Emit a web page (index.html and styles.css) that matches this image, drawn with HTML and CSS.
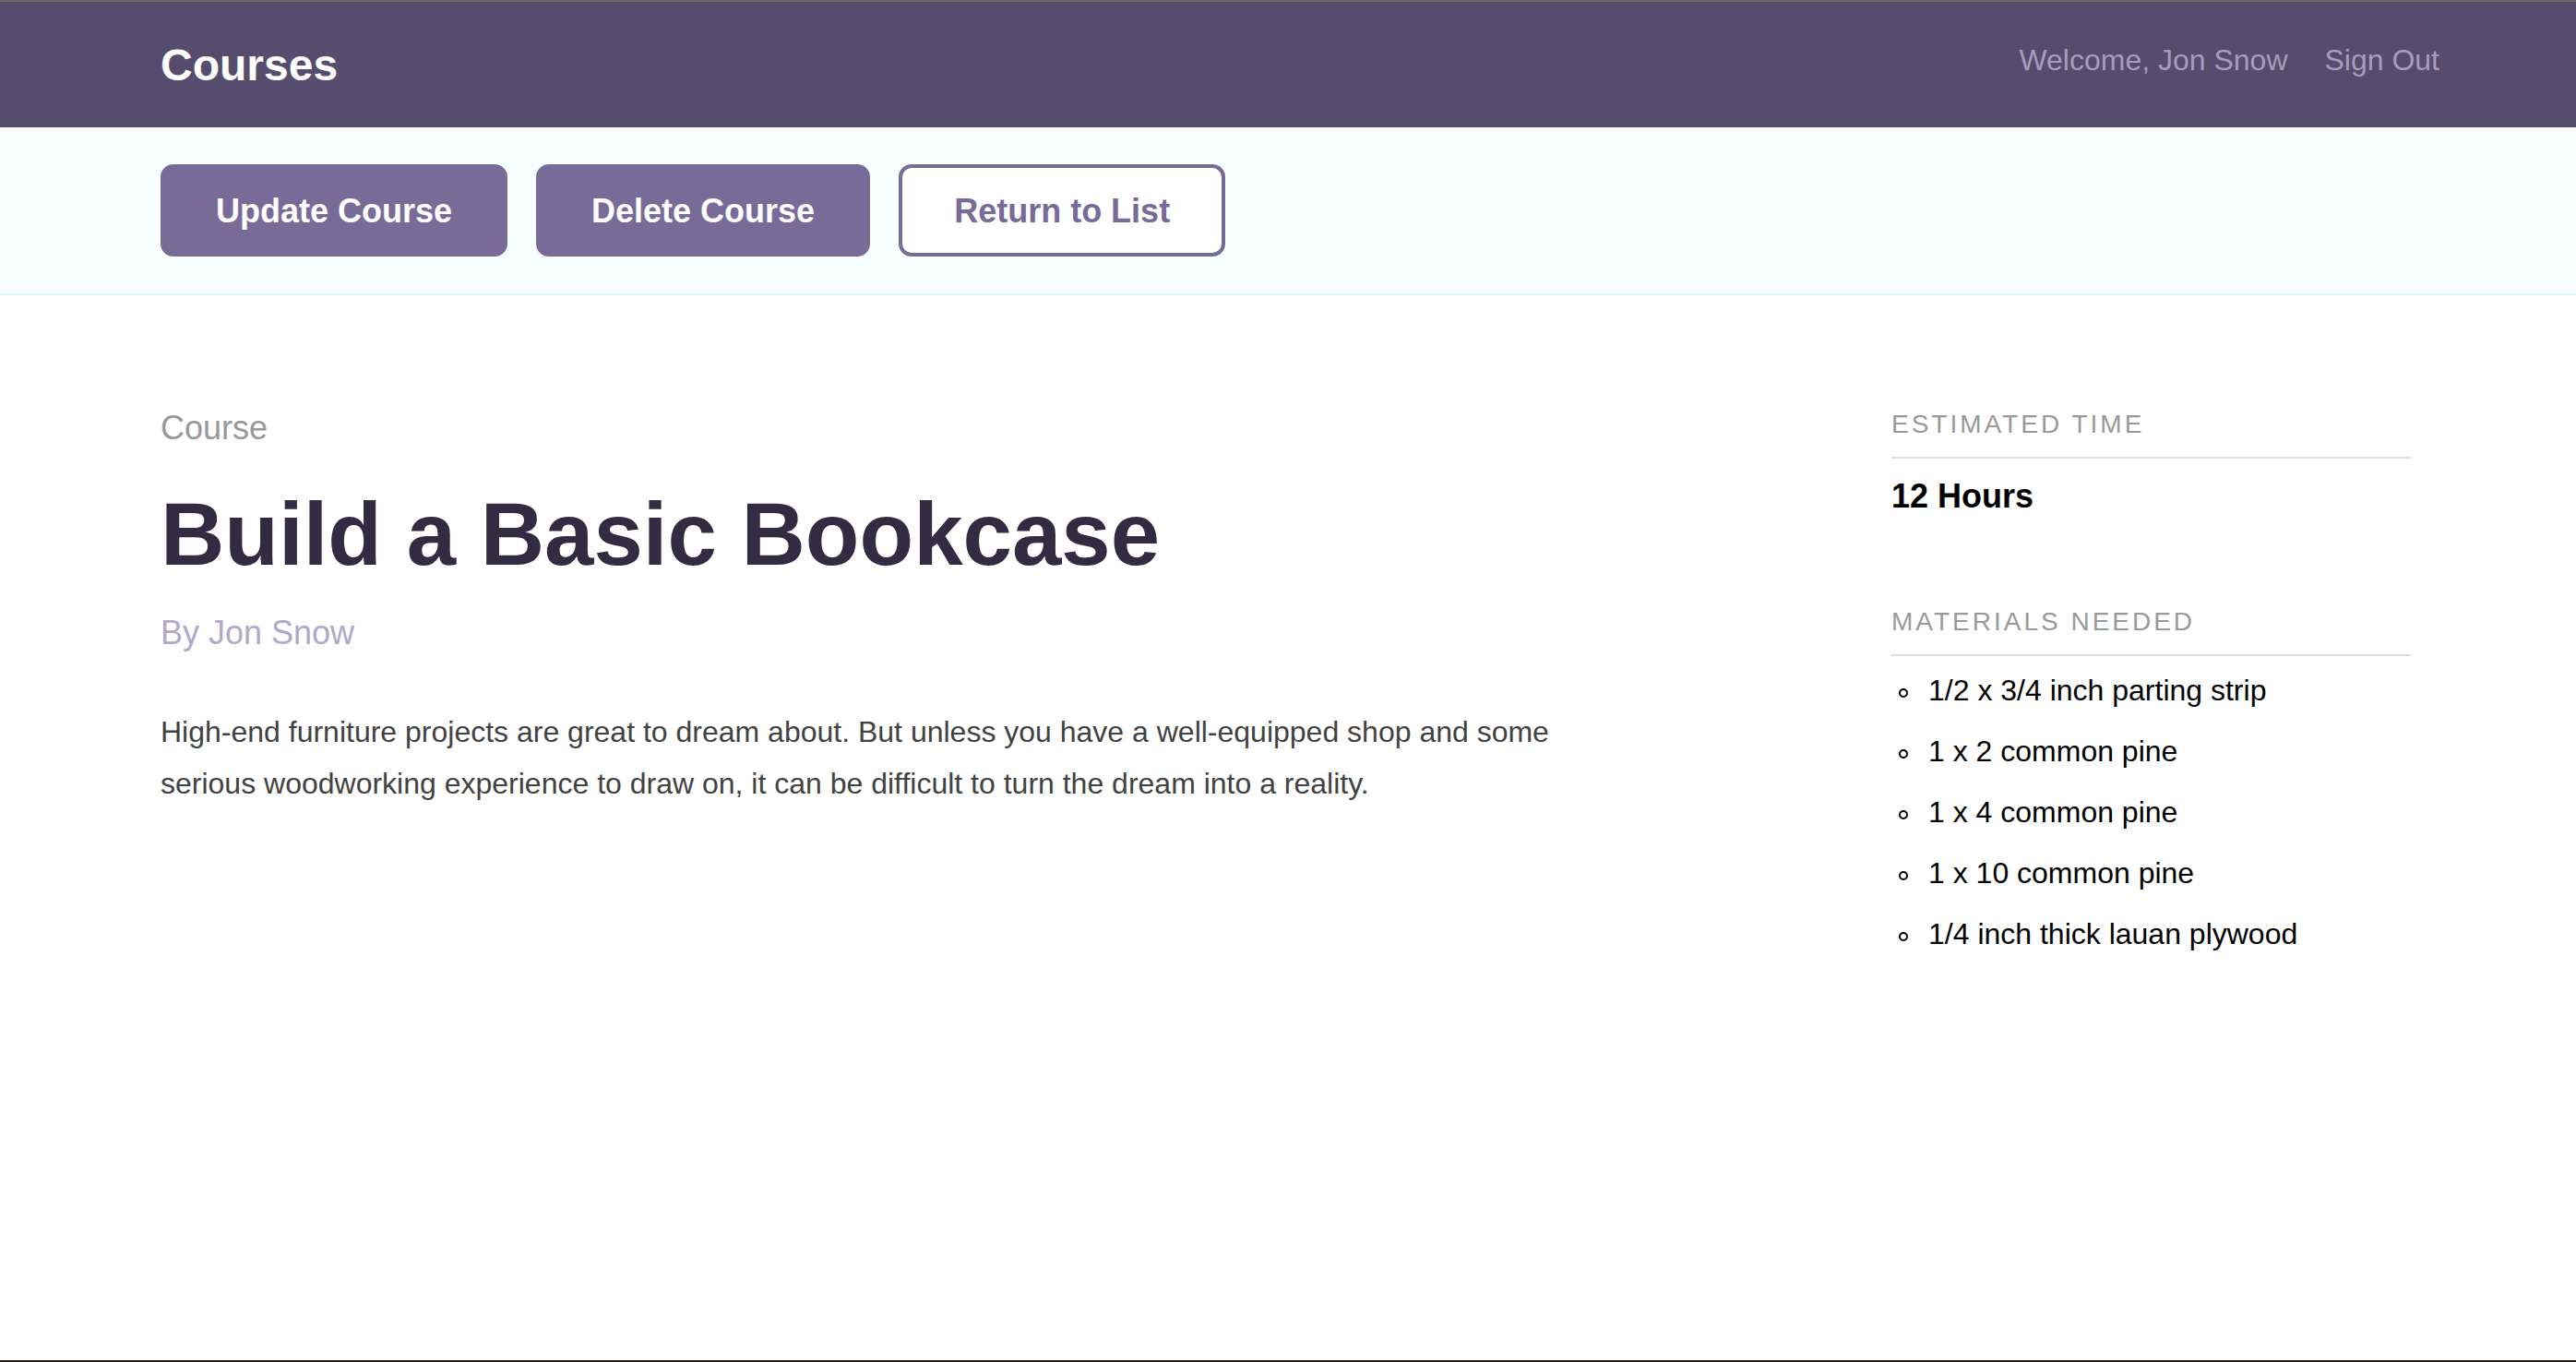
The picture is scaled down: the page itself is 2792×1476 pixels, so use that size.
FILE: index.html
```html
<!DOCTYPE html>
<html lang="en">
<head>
<meta charset="utf-8">
<title>Courses</title>
<link rel="stylesheet" href="styles.css">
</head>
<body>
<div class="page">
  <header class="header">
    <h1 class="header-logo">Courses</h1>
    <nav class="header-nav">
      <span class="header-welcome">Welcome, Jon Snow</span>
      <a class="header-signout" href="#">Sign Out</a>
    </nav>
  </header>
  <div class="actions">
    <a class="button" href="#">Update Course</a>
    <a class="button" href="#">Delete Course</a>
    <a class="button button-secondary" href="#">Return to List</a>
  </div>
  <main class="detail">
    <div class="detail-main">
      <h4 class="detail-label">Course</h4>
      <h3 class="detail-title">Build a Basic Bookcase</h3>
      <p class="detail-author">By Jon Snow</p>
      <p class="detail-desc">High-end furniture projects are great to dream about. But unless you have a well-equipped shop and some serious woodworking experience to draw on, it can be difficult to turn the dream into a reality.</p>
    </div>
    <aside class="detail-side">
      <h4 class="side-label">Estimated Time</h4>
      <p class="side-time">12 Hours</p>
      <h4 class="side-label side-label-next">Materials Needed</h4>
      <ul class="side-list">
        <li>1/2 x 3/4 inch parting strip</li>
        <li>1 x 2 common pine</li>
        <li>1 x 4 common pine</li>
        <li>1 x 10 common pine</li>
        <li>1/4 inch thick lauan plywood</li>
      </ul>
    </aside>
  </main>
</div>
</body>
</html>
```

FILE: styles.css
```css
*, *::before, *::after {
  box-sizing: border-box;
}

html, body {
  margin: 0;
  padding: 0;
}

body {
  font-family: "Liberation Sans", Arial, Helvetica, sans-serif;
  background: #ffffff;
  color: #000;
}

.page {
  min-height: 100vh;
  border-top: 2px solid #6e6c67;
  border-bottom: 2px solid #1e1d17;
  display: flex;
  flex-direction: column;
}

/* Header */
.header {
  height: 136px;
  background: #564c6d;
  display: flex;
  justify-content: space-between;
  align-items: flex-start;
  padding: 45px 148px 0 174px;
}

.header-logo {
  margin: 0;
  font-size: 48px;
  line-height: 48px;
  font-weight: 700;
  color: #ffffff;
}

.header-nav {
  display: flex;
  gap: 40px;
  margin-top: 2px;
  font-size: 32px;
  line-height: 32px;
  color: #a59eba;
}

.header-signout {
  color: #a59eba;
  text-decoration: none;
}

/* Action bar */
.actions {
  background: #f7feff;
  border-bottom: 2px solid #dcf5fa;
  padding: 40px 174px;
  display: flex;
  gap: 31px;
}

.button {
  display: inline-block;
  height: 100px;
  padding: 0 56px;
  border: 4px solid #786b98;
  border-radius: 14px;
  background: #786b98;
  color: #ffffff;
  font-size: 36px;
  font-weight: 700;
  line-height: 93px;
  text-decoration: none;
}

.button-secondary {
  background: #ffffff;
  color: #786b98;
}

/* Detail */
.detail {
  display: grid;
  grid-template-columns: 1fr 563px;
  padding: 124px 179px 0 174px;
}

.detail-label {
  margin: 0;
  font-size: 36px;
  line-height: 40px;
  font-weight: 400;
  color: #999999;
}

.detail-title {
  margin: 40px 0 0;
  font-size: 96px;
  line-height: 110px;
  font-weight: 700;
  color: #322b42;
}

.detail-author {
  margin: 32px 0 0;
  font-size: 36px;
  line-height: 40px;
  color: #b1a9c8;
}

.detail-desc {
  margin: 59px 0 0;
  max-width: 1560px;
  font-size: 32px;
  line-height: 56px;
  color: #424242;
}

.side-label {
  margin: 0;
  padding-bottom: 19px;
  border-bottom: 2px solid #dddddd;
  font-size: 28px;
  line-height: 32px;
  font-weight: 400;
  letter-spacing: 3px;
  text-transform: uppercase;
  color: #999999;
}

.side-time {
  margin: 21px 0 0;
  font-size: 36px;
  line-height: 40px;
  font-weight: 700;
  color: #000000;
}

.side-label-next {
  margin-top: 100px;
}

.side-list {
  margin: 4px 0 0;
  padding-left: 40px;
  list-style: none;
  font-size: 32px;
  line-height: 66px;
  color: #000000;
}

.side-list li::before {
  content: "";
  display: inline-block;
  width: 10px;
  height: 10px;
  margin-left: -32px;
  margin-right: 22px;
  border: 2px solid #000000;
  border-radius: 50%;
  vertical-align: middle;
}
```
